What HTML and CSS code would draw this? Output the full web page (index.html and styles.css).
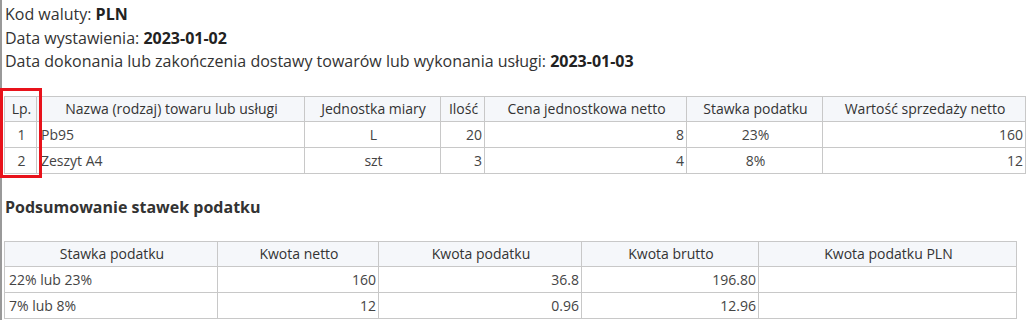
FILE: index.html
```html
<!DOCTYPE html>
<html lang="pl">
<head>
    <meta charset="UTF-8">
    <title>Faktura - podgląd</title>
    <link rel="stylesheet" href="styles.css">
</head>
<body>
    <div class="invoice">
        <div class="meta">
            <p>Kod waluty: <b>PLN</b></p>
            <p>Data wystawienia: <b>2023-01-02</b></p>
            <p>Data dokonania lub zakończenia dostawy towarów lub wykonania usługi: <b>2023-01-03</b></p>
        </div>

        <div class="items-wrap">
            <table class="grid items">
                <colgroup>
                    <col style="width: 32px">
                    <col style="width: 268px">
                    <col style="width: 136px">
                    <col style="width: 44px">
                    <col style="width: 202px">
                    <col style="width: 136px">
                    <col>
                </colgroup>
                <thead>
                    <tr>
                        <th>Lp.</th>
                        <th>Nazwa (rodzaj) towaru lub usługi</th>
                        <th>Jednostka miary</th>
                        <th>Ilość</th>
                        <th>Cena jednostkowa netto</th>
                        <th>Stawka podatku</th>
                        <th>Wartość sprzedaży netto</th>
                    </tr>
                </thead>
                <tbody>
                    <tr>
                        <td class="c">1</td>
                        <td>Pb95</td>
                        <td class="c">L</td>
                        <td class="r">20</td>
                        <td class="r">8</td>
                        <td class="c">23%</td>
                        <td class="r">160</td>
                    </tr>
                    <tr>
                        <td class="c">2</td>
                        <td>Zeszyt A4</td>
                        <td class="c">szt</td>
                        <td class="r">3</td>
                        <td class="r">4</td>
                        <td class="c">8%</td>
                        <td class="r">12</td>
                    </tr>
                </tbody>
            </table>
            <div class="mark"></div>
        </div>

        <h3 class="section-title">Podsumowanie stawek podatku</h3>

        <table class="grid summary">
            <colgroup>
                <col style="width: 213px">
                <col style="width: 161px">
                <col style="width: 203px">
                <col style="width: 177px">
                <col>
            </colgroup>
            <thead>
                <tr>
                    <th>Stawka podatku</th>
                    <th>Kwota netto</th>
                    <th>Kwota podatku</th>
                    <th>Kwota brutto</th>
                    <th>Kwota podatku PLN</th>
                </tr>
            </thead>
            <tbody>
                <tr>
                    <td>22% lub 23%</td>
                    <td class="r">160</td>
                    <td class="r">36.8</td>
                    <td class="r">196.80</td>
                    <td></td>
                </tr>
                <tr>
                    <td>7% lub 8%</td>
                    <td class="r">12</td>
                    <td class="r">0.96</td>
                    <td class="r">12.96</td>
                    <td></td>
                </tr>
            </tbody>
        </table>
    </div>
</body>
</html>
```

FILE: styles.css
```css
* {
    margin: 0;
    padding: 0;
    box-sizing: border-box;
}

body {
    font-family: 'Open Sans', 'Noto Sans', sans-serif;
    color: #333;
    background: #fff;
}

.invoice {
    min-height: 100vh;
    border-left: 2px solid #999;
    padding: 3px 0 0 2px;
}

.meta p {
    font-size: 16px;
    line-height: 23.5px;
    padding-left: 1px;
}

.meta b {
    font-weight: 700;
    color: #222;
}

.items-wrap {
    position: relative;
    margin-top: 22px;
}

/* red highlight around the Lp. column */
.mark {
    position: absolute;
    left: -4px;
    top: -8px;
    width: 42px;
    height: 90px;
    border: 3px solid #e8121b;
}

.grid {
    border-collapse: collapse;
    table-layout: fixed;
    font-size: 14px;
    color: #444;
}

.grid th,
.grid td {
    border: 1px solid #c8c8c8;
    height: 26px;
    padding: 0 2px 0 4px;
    white-space: nowrap;
    overflow: hidden;
}

.grid th {
    background: #f5f7fa;
    font-weight: 400;
    color: #333;
    text-align: center;
    height: 25px;
}

.grid .c {
    text-align: center;
}

.grid .r {
    text-align: right;
}

.items {
    width: 1022px;
}

.section-title {
    font-size: 16px;
    font-weight: 700;
    color: #333;
    line-height: 24px;
    margin: 21px 0 22px 1px;
}

.summary {
    width: 1013px;
}
```
